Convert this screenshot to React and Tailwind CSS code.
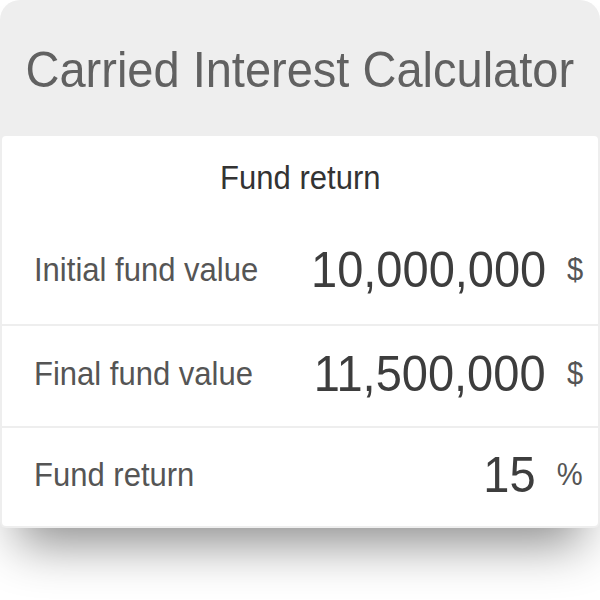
import React from "react";

const rows = [
  { label: "Initial fund value", value: "10,000,000", unit: "$" },
  { label: "Final fund value", value: "11,500,000", unit: "$" },
  { label: "Fund return", value: "15", unit: "%" },
];

// the type on this widget is a slightly condensed Helvetica
const narrow = "inline-block scale-x-[0.94]";

const Row = ({ label, value, unit, className = "" }) => (
  <div className={`flex items-center justify-between pl-[32px] pr-[15px] pb-[5px] ${className}`}>
    <span className={`${narrow} origin-left text-[33px] text-[#555555]`}>{label}</span>
    <div className="flex items-center gap-[20px]">
      <span className={`${narrow} origin-right text-[50px] text-[#3d3d3d]`}>{value}</span>
      <span className={`${narrow} origin-right text-[31px] text-[#555555]`}>{unit}</span>
    </div>
  </div>
);

const App = () => {
  return (
    <div className="w-[600px] h-[600px] bg-white font-['Liberation_Sans',Arial,sans-serif] leading-none">
      <div className="rounded-t-[20px] rounded-b-[6px] bg-[#eeeeee] px-[2px] pb-[2px] shadow-[0_34px_50px_-18px_rgba(0,0,0,0.45)]">
        {/* Title bar */}
        <div className="h-[136px] pt-[4px] flex items-center justify-center text-[#616161]">
          <span className={`${narrow} origin-center text-[50px]`}>Carried Interest Calculator</span>
        </div>

        {/* Section heading + first input */}
        <div className="bg-white rounded-t-[4px]">
          <div className="h-[84px] pb-[2px] flex items-center justify-center text-[#333333]">
            <span className={`${narrow} origin-center text-[33px]`}>Fund return</span>
          </div>
          <Row {...rows[0]} className="h-[104px]" />
        </div>

        <div className="mt-[2px] bg-white">
          <Row {...rows[1]} className="h-[100px]" />
        </div>

        <div className="mt-[2px] bg-white rounded-b-[4px]">
          <Row {...rows[2]} className="h-[98px]" />
        </div>
      </div>
    </div>
  );
};

export default App;
